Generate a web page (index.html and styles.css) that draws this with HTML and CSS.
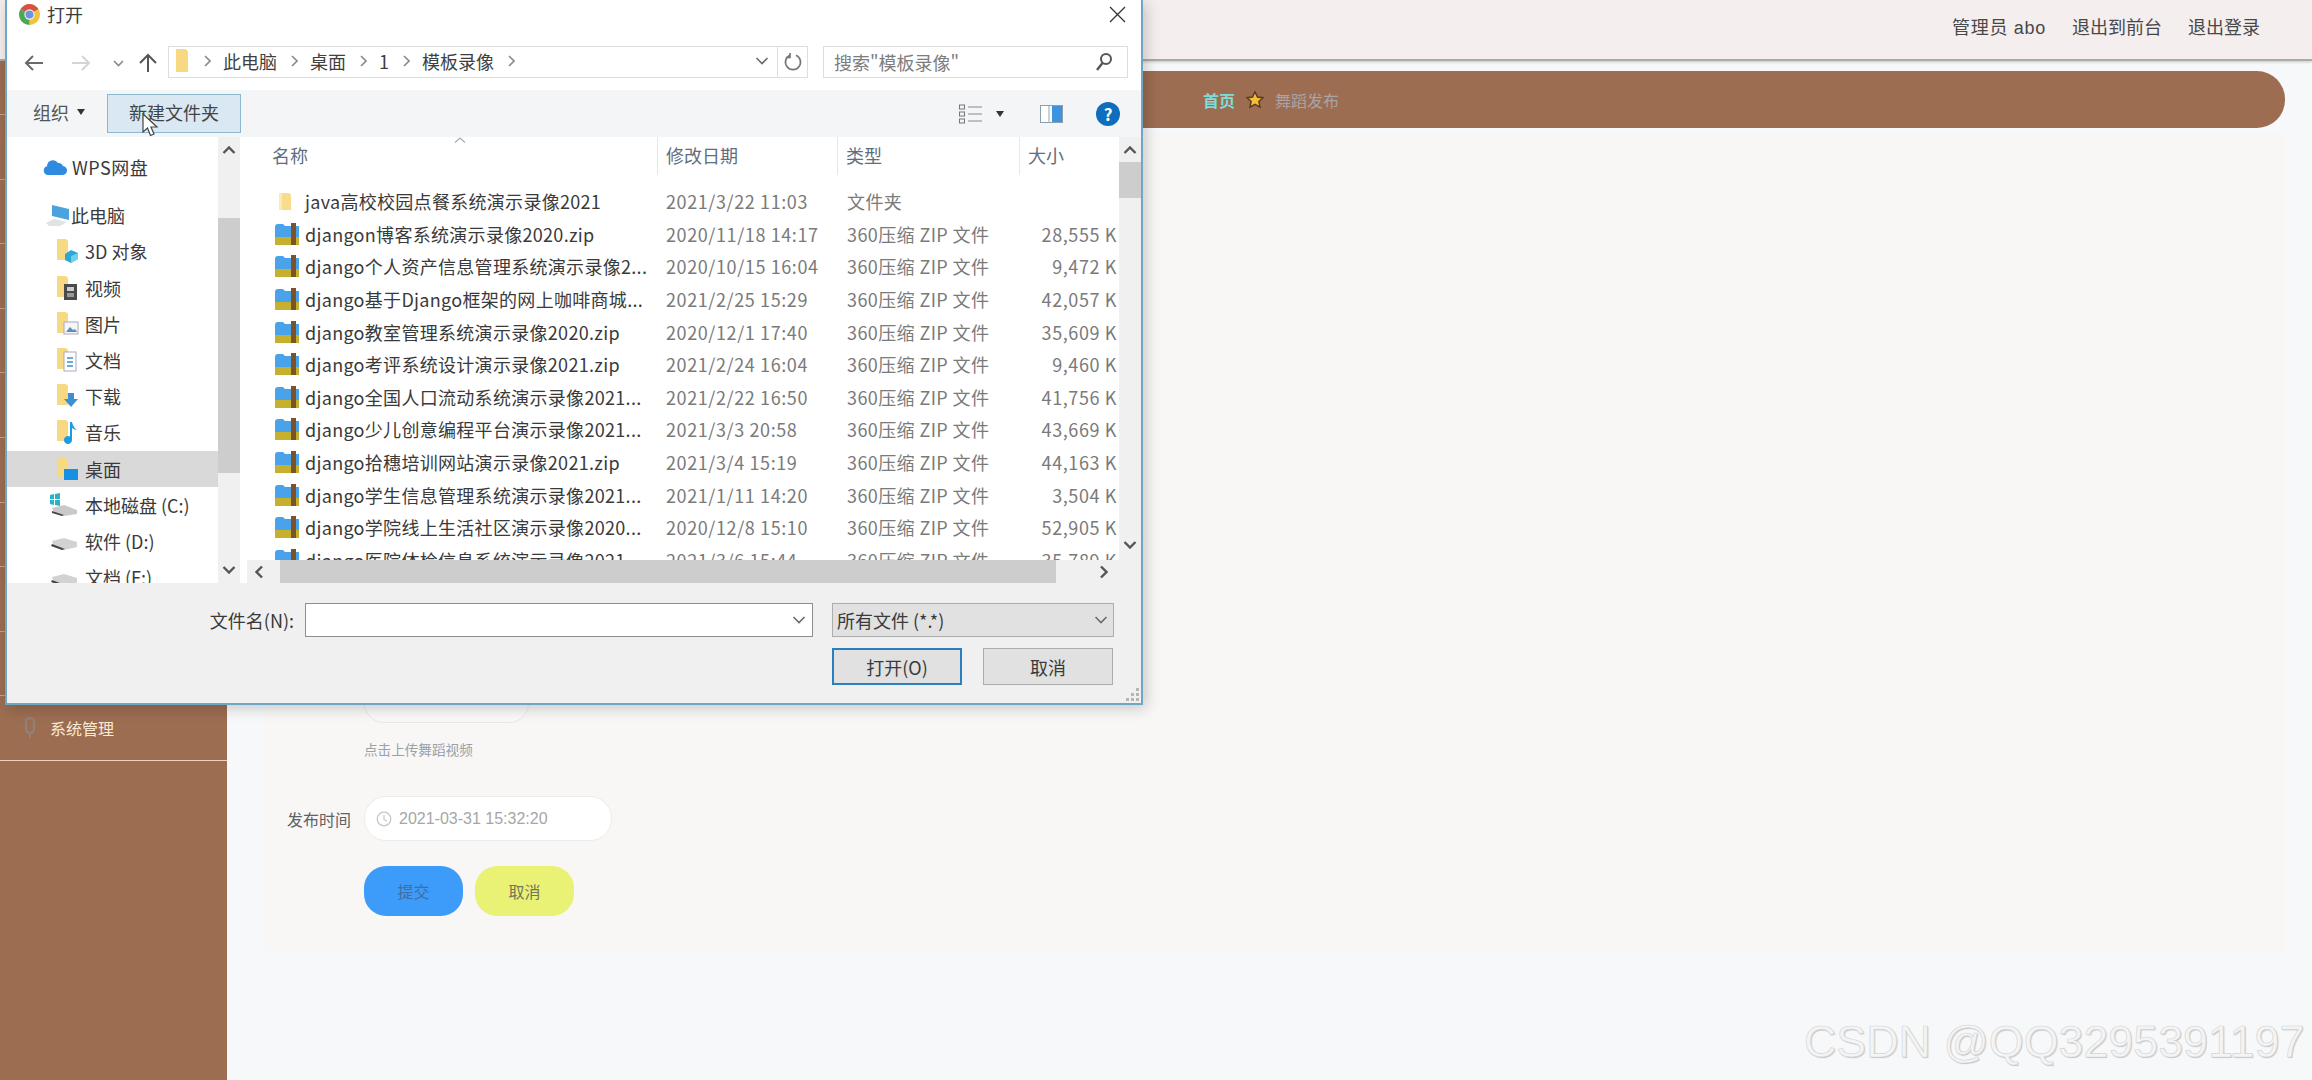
FILE: index.html
```html
<!DOCTYPE html>
<html lang="zh-CN">
<head>
<meta charset="utf-8">
<title>舞蹈发布</title>
<link rel="stylesheet" href="styles.css">
</head>
<body>
<svg class="defs" width="0" height="0" aria-hidden="true">
  <symbol id="i-chev-r" viewBox="0 0 8 14"><path d="M2 2l5 5-5 5" fill="none" stroke="#8a8a8a" stroke-width="1.6"/></symbol>
  <symbol id="i-chev-d" viewBox="0 0 14 8"><path d="M1.500 1l5.500 5.500L12.500 1" fill="none" stroke="#6a6a6a" stroke-width="1.600"/></symbol>
  <symbol id="i-up" viewBox="0 0 14 8"><path d="M1.500 7L7 1.500 12.500 7" fill="none" stroke="#555" stroke-width="2.400"/></symbol>
  <symbol id="i-down" viewBox="0 0 14 8"><path d="M1.500 1L7 6.500 12.500 1" fill="none" stroke="#555" stroke-width="2.400"/></symbol>
  <symbol id="i-left" viewBox="0 0 8 14"><path d="M7 1.500L1.500 7 7 12.500" fill="none" stroke="#555" stroke-width="2.400"/></symbol>
  <symbol id="i-right" viewBox="0 0 8 14"><path d="M1 1.500L6.500 7 1 12.500" fill="none" stroke="#555" stroke-width="2.400"/></symbol>
  <symbol id="i-zip" viewBox="0 0 24 22">
    <path d="M0 4q0-3 3-3h5l2 2h14v12H0z" fill="#4aa3ea"/>
    <rect x="0" y="14" width="24" height="8" fill="#c8b02f"/>
    <rect x="16" y="0" width="5" height="22" fill="#7a5426"/>
  </symbol>
  <symbol id="i-folder" viewBox="0 0 16 18"><path d="M2 0h10l2 2v15H2z" fill="#f7dc8c"/><rect x="2" y="0" width="3" height="17" fill="#fbeab8"/></symbol>
  <symbol id="i-tf" viewBox="0 0 12 22"><path d="M0 0h9l2 2v19H0z" fill="#f7d983"/></symbol>
  <symbol id="i-wps" viewBox="0 0 24 20"><path d="M5 18a4.500 4.500 0 0 1-1-8.800A6 6 0 0 1 15 6a5 5 0 0 1 5 3 4.500 4.500 0 0 1-1 9z" fill="#2f8be0"/></symbol>
  <symbol id="i-pc" viewBox="0 0 26 24">
    <path d="M7 2l17 4v11L7 13z" fill="#4ba3dd"/>
    <path d="M1 20l8-4 13 3-7 4H4z" fill="#dfe3e6"/>
  </symbol>
  <symbol id="i-3d" viewBox="0 0 24 24"><use href="#i-tf" width="12" height="22"/><path d="M8 15l6-4 7 3v6l-7 4-6-3z" fill="#2fa6d6"/><path d="M14 17l7-3v6l-7 4z" fill="#6fd0ea"/></symbol>
  <symbol id="i-video" viewBox="0 0 24 24"><use href="#i-tf" width="12" height="22"/><rect x="7" y="8" width="13" height="16" fill="#4a4a4a"/><rect x="10" y="11" width="7" height="4" fill="#ccc"/><rect x="10" y="17" width="7" height="4" fill="#999"/></symbol>
  <symbol id="i-pic" viewBox="0 0 24 24"><use href="#i-tf" width="12" height="22"/><rect x="7" y="10" width="14" height="12" fill="#f4f6f8" stroke="#aab" stroke-width="1"/><path d="M9 20l4-5 3 3 2-1 2 3z" fill="#5a8fb5"/></symbol>
  <symbol id="i-doc" viewBox="0 0 24 24"><use href="#i-tf" width="12" height="22"/><rect x="7" y="4" width="12" height="19" fill="#fff" stroke="#aab" stroke-width="1"/><path d="M10 10h6M10 14h6M10 18h6" stroke="#3d8fd1" stroke-width="1.500"/></symbol>
  <symbol id="i-dl" viewBox="0 0 24 24"><use href="#i-tf" width="12" height="22"/><path d="M11 9h6v6h4l-7 8-7-8h4z" fill="#3d8fd1"/></symbol>
  <symbol id="i-music" viewBox="0 0 24 24"><use href="#i-tf" width="12" height="22"/><path d="M13 2h2q1 5 5 8-2 0-5-2v12a4 4 0 1 1-2-3.500z" fill="#1e9be0"/></symbol>
  <symbol id="i-desk" viewBox="0 0 24 24"><use href="#i-tf" width="12" height="22"/><rect x="7" y="12" width="14" height="11" fill="#1590e2"/></symbol>
  <symbol id="i-drive-c" viewBox="0 0 30 24">
    <path d="M3 15l12-3 13 5v4l-13 2-10-3z" fill="#c9c9c9"/><path d="M3 20l10 3 2-1-12-4z" fill="#444"/>
    <path d="M1 2l4-1v5H1zM6 1l5-1v6H6zM1 7h4v5l-4-1zM6 7h5v6l-5-1z" fill="#29b3c9"/>
  </symbol>
  <symbol id="i-drive" viewBox="0 0 30 24">
    <path d="M3 12l12-3 13 4v5l-13 3-10-3z" fill="#d2d2d2"/><path d="M2 17l11 4 3-1-13-5z" fill="#444"/>
  </symbol>
</svg>

<div class="page">
  <header class="topbar">
    <span class="top-user">管理员 abo</span>
    <span>退出到前台</span>
    <span>退出登录</span>
  </header>
  <div class="shell">
    <aside class="sidebar">
      <ul class="menu">
        <li></li><li></li><li></li><li></li><li></li><li></li><li></li><li></li><li></li>
        <li class="menu-item">
          <svg class="menu-icon" width="12" height="22" viewBox="0 0 12 22"><rect x="2" y="1" width="8" height="15" rx="4" fill="none" stroke="#8f8176" stroke-width="2.500"/><path d="M6 16v5" stroke="#8f8176" stroke-width="2"/></svg>
          <span>系统管理</span>
        </li>
      </ul>
    </aside>
    <main class="content">
      <nav class="crumbs">
        <span class="crumb-home">首页</span>
        <svg class="star" width="18" height="17" viewBox="0 0 24 23"><path d="M12 1l3.300 7.200 7.700.8-5.800 5.200 1.700 7.800L12 18l-6.900 4 1.700-7.800L1 9l7.700-.8z" fill="#f4bd3c" stroke="#5a3d20" stroke-width="2"/></svg>
        <span class="crumb-now">舞蹈发布</span>
      </nav>
      <section class="card">
        <div class="field-row">
          <span class="label"></span>
          <div class="upload"></div>
        </div>
        <p class="hint">点击上传舞蹈视频</p>
        <div class="field-row date-row">
          <span class="label">发布时间</span>
          <div class="date-input">
            <svg width="16" height="16" viewBox="0 0 16 16"><circle cx="8" cy="8" r="6.800" fill="none" stroke="#c8c8c8" stroke-width="1.300"/><path d="M8 4v4.500l3 1.500" fill="none" stroke="#c8c8c8" stroke-width="1.300"/></svg>
            <span>2021-03-31 15:32:20</span>
          </div>
        </div>
        <div class="actions">
          <button class="btn btn-submit" type="button">提交</button>
          <button class="btn btn-cancel" type="button">取消</button>
        </div>
      </section>
    </main>
  </div>
</div>

<div class="watermark">CSDN @QQ3295391197</div>

<div class="dialog">
  <div class="titlebar">
    <svg class="chrome" width="23" height="23" viewBox="0 0 24 24">
      <path d="M12 12L2.500 6.500A11 11 0 0 1 21.500 6.500z" fill="#d9503f"/>
      <path d="M12 12L21.500 6.500A11 11 0 0 1 12 23z" fill="#f0c33c"/>
      <path d="M12 12L12 23A11 11 0 0 1 2.500 6.500z" fill="#4ca852"/>
      <circle cx="12" cy="12" r="5.400" fill="#f2f2f2"/>
      <circle cx="12" cy="12" r="4.200" fill="#6c94e0"/>
    </svg>
    <span class="title">打开</span>
    <svg class="close" width="17" height="17" viewBox="0 0 17 17"><path d="M1 1l15 15M16 1L1 16" stroke="#333" stroke-width="1.300"/></svg>
  </div>

  <div class="navrow">
    <svg class="navicons" width="161" height="32" viewBox="0 0 161 32">
      <path d="M36 17H19M26 10l-7 7 7 7" fill="none" stroke="#6b6b6b" stroke-width="2"/>
      <path d="M65 17h17M75 10l7 7-7 7" fill="none" stroke="#d4d4d4" stroke-width="2"/>
      <path d="M107 15l4.500 4.500L116 15" fill="none" stroke="#8a8a8a" stroke-width="1.600"/>
      <path d="M141 26V9M133 17l8-8 8 8" fill="none" stroke="#555" stroke-width="2"/>
    </svg>
    <div class="address">
      <svg class="addr-folder" width="15" height="24"><use href="#i-tf" width="15" height="24"/></svg>
      <svg width="8" height="14"><use href="#i-chev-r"/></svg>
      <span>此电脑</span>
      <svg width="8" height="14"><use href="#i-chev-r"/></svg>
      <span>桌面</span>
      <svg width="8" height="14"><use href="#i-chev-r"/></svg>
      <span>1</span>
      <svg width="8" height="14"><use href="#i-chev-r"/></svg>
      <span>模板录像</span>
      <svg width="8" height="14"><use href="#i-chev-r"/></svg>
      <span class="addr-drop"><svg width="14" height="8"><use href="#i-chev-d"/></svg></span>
      <span class="addr-refresh"><svg width="20" height="20" viewBox="0 0 20 20"><path d="M13 3.300a7.500 7.500 0 1 1-6 0M7 1v4.500H2.800" fill="none" stroke="#777" stroke-width="1.700"/></svg></span>
    </div>
    <div class="search">
      <span>搜索"模板录像"</span>
      <svg width="18" height="20" viewBox="0 0 18 20"><circle cx="11" cy="7" r="5" fill="none" stroke="#555" stroke-width="2"/><path d="M7.500 11L2 18" stroke="#555" stroke-width="2.400"/></svg>
    </div>
  </div>

  <div class="toolbar">
    <span class="tool-org">组织</span>
    <span class="caret"></span>
    <span class="tool-new">新建文件夹</span>
    <div class="tool-right">
      <svg width="23" height="20" viewBox="0 0 23 20"><path d="M9 3h14M9 10h14M9 17h14" stroke="#8a8a8a" stroke-width="1.200"/><rect x=".5" y="1" width="5" height="4" fill="none" stroke="#777"/><rect x=".5" y="8" width="5" height="4" fill="none" stroke="#777"/><rect x=".5" y="15" width="5" height="4" fill="none" stroke="#777"/></svg>
      <span class="caret caret-view"></span>
      <svg class="pane-icon" width="23" height="18" viewBox="0 0 23 18"><rect x=".5" y=".5" width="22" height="17" fill="#fff" stroke="#8aa0b0"/><rect x="12" y="1" width="10" height="16" fill="#3d94de"/><rect x="8" y="1" width="2" height="16" fill="#c5d2dc"/></svg>
      <span class="help">?</span>
    </div>
  </div>

  <div class="panes">
    <div class="tree">
      <div class="tree-item lvl1"><svg width="24" height="20"><use href="#i-wps"/></svg><span class="wps">WPS网盘</span></div>
      <div class="tree-item lvl1 tree-pc"><svg width="26" height="24"><use href="#i-pc"/></svg><span>此电脑</span></div>
      <div class="tree-item lvl2"><svg width="24" height="24"><use href="#i-3d"/></svg><span>3D 对象</span></div>
      <div class="tree-item lvl2"><svg width="24" height="24"><use href="#i-video"/></svg><span>视频</span></div>
      <div class="tree-item lvl2"><svg width="24" height="24"><use href="#i-pic"/></svg><span>图片</span></div>
      <div class="tree-item lvl2"><svg width="24" height="24"><use href="#i-doc"/></svg><span>文档</span></div>
      <div class="tree-item lvl2"><svg width="24" height="24"><use href="#i-dl"/></svg><span>下载</span></div>
      <div class="tree-item lvl2"><svg width="24" height="24"><use href="#i-music"/></svg><span>音乐</span></div>
      <div class="tree-item lvl2 selected"><svg width="24" height="24"><use href="#i-desk"/></svg><span>桌面</span></div>
      <div class="tree-item drive"><svg width="30" height="24"><use href="#i-drive-c"/></svg><span>本地磁盘 (C:)</span></div>
      <div class="tree-item drive"><svg width="30" height="24"><use href="#i-drive"/></svg><span>软件 (D:)</span></div>
      <div class="tree-item drive"><svg width="30" height="24"><use href="#i-drive"/></svg><span>文档 (F:)</span></div>
    </div>
    <div class="vscroll tree-scroll">
      <svg width="14" height="8"><use href="#i-up"/></svg>
      <div class="vthumb"></div>
      <svg class="vdown" width="14" height="8"><use href="#i-down"/></svg>
    </div>

    <div class="files">
      <div class="files-main">
        <div class="file-head">
          <span class="col-name">名称<svg class="sort" width="14" height="8" viewBox="0 0 14 8"><path d="M2 6.500L7 2l5 4.500" fill="none" stroke="#aab" stroke-width="1.300"/></svg></span>
          <span class="col">修改日期</span>
          <span class="col">类型</span>
          <span class="col">大小</span>
        </div>
        <div class="file-rows">
          <div class="file-row"><span class="name"><svg class="ficon-folder" width="16" height="18"><use href="#i-folder"/></svg>java高校校园点餐系统演示录像2021</span><span class="meta">2021/3/22 11:03</span><span class="meta">文件夹</span><span class="size"></span></div>
          <div class="file-row"><span class="name"><svg class="ficon" width="24" height="22"><use href="#i-zip"/></svg>djangon博客系统演示录像2020.zip</span><span class="meta">2020/11/18 14:17</span><span class="meta">360压缩 ZIP 文件</span><span class="size">28,555 K</span></div>
          <div class="file-row"><span class="name"><svg class="ficon" width="24" height="22"><use href="#i-zip"/></svg>django个人资产信息管理系统演示录像2...</span><span class="meta">2020/10/15 16:04</span><span class="meta">360压缩 ZIP 文件</span><span class="size">9,472 K</span></div>
          <div class="file-row"><span class="name"><svg class="ficon" width="24" height="22"><use href="#i-zip"/></svg>django基于Django框架的网上咖啡商城...</span><span class="meta">2021/2/25 15:29</span><span class="meta">360压缩 ZIP 文件</span><span class="size">42,057 K</span></div>
          <div class="file-row"><span class="name"><svg class="ficon" width="24" height="22"><use href="#i-zip"/></svg>django教室管理系统演示录像2020.zip</span><span class="meta">2020/12/1 17:40</span><span class="meta">360压缩 ZIP 文件</span><span class="size">35,609 K</span></div>
          <div class="file-row"><span class="name"><svg class="ficon" width="24" height="22"><use href="#i-zip"/></svg>django考评系统设计演示录像2021.zip</span><span class="meta">2021/2/24 16:04</span><span class="meta">360压缩 ZIP 文件</span><span class="size">9,460 K</span></div>
          <div class="file-row"><span class="name"><svg class="ficon" width="24" height="22"><use href="#i-zip"/></svg>django全国人口流动系统演示录像2021...</span><span class="meta">2021/2/22 16:50</span><span class="meta">360压缩 ZIP 文件</span><span class="size">41,756 K</span></div>
          <div class="file-row"><span class="name"><svg class="ficon" width="24" height="22"><use href="#i-zip"/></svg>django少儿创意编程平台演示录像2021...</span><span class="meta">2021/3/3 20:58</span><span class="meta">360压缩 ZIP 文件</span><span class="size">43,669 K</span></div>
          <div class="file-row"><span class="name"><svg class="ficon" width="24" height="22"><use href="#i-zip"/></svg>django拾穗培训网站演示录像2021.zip</span><span class="meta">2021/3/4 15:19</span><span class="meta">360压缩 ZIP 文件</span><span class="size">44,163 K</span></div>
          <div class="file-row"><span class="name"><svg class="ficon" width="24" height="22"><use href="#i-zip"/></svg>django学生信息管理系统演示录像2021...</span><span class="meta">2021/1/11 14:20</span><span class="meta">360压缩 ZIP 文件</span><span class="size">3,504 K</span></div>
          <div class="file-row"><span class="name"><svg class="ficon" width="24" height="22"><use href="#i-zip"/></svg>django学院线上生活社区演示录像2020...</span><span class="meta">2020/12/8 15:10</span><span class="meta">360压缩 ZIP 文件</span><span class="size">52,905 K</span></div>
          <div class="file-row"><span class="name"><svg class="ficon" width="24" height="22"><use href="#i-zip"/></svg>django医院体检信息系统演示录像2021...</span><span class="meta">2021/3/6 15:44</span><span class="meta">360压缩 ZIP 文件</span><span class="size">35,789 K</span></div>
        </div>
        <div class="hscroll">
          <svg width="8" height="14"><use href="#i-left"/></svg>
          <div class="hthumb"></div>
          <svg width="8" height="14"><use href="#i-right"/></svg>
        </div>
      </div>
      <div class="vscroll list-scroll">
        <svg width="14" height="8"><use href="#i-up"/></svg>
        <div class="vthumb"></div>
        <svg class="vdown" width="14" height="8"><use href="#i-down"/></svg>
      </div>
    </div>
  </div>

  <div class="footer">
    <div class="foot-row">
      <span class="foot-label">文件名(N):</span>
      <div class="foot-input"><svg width="14" height="8"><use href="#i-chev-d"/></svg></div>
      <div class="foot-select"><span>所有文件 (*.*)</span><svg width="14" height="8"><use href="#i-chev-d"/></svg></div>
    </div>
    <div class="foot-buttons">
      <span class="dlg-btn dlg-primary">打开(O)</span>
      <span class="dlg-btn">取消</span>
    </div>
    <svg class="grip" width="16" height="16" viewBox="0 0 16 16"><g fill="#b5b5b5"><rect x="12" y="2" width="3" height="3"/><rect x="7" y="7" width="3" height="3"/><rect x="12" y="7" width="3" height="3"/><rect x="2" y="12" width="3" height="3"/><rect x="7" y="12" width="3" height="3"/><rect x="12" y="12" width="3" height="3"/></g></svg>
  </div>

  <svg class="cursor" width="16" height="25" viewBox="0 0 16 25"><path d="M1 1v18l4.500-4 3 7.500 3.500-1.500-3-7h6z" fill="#fff" stroke="#444" stroke-width="1.200"/></svg>
</div>
</body>
</html>
```

FILE: styles.css
```css
* { box-sizing: border-box; }
html, body { margin: 0; height: 100%; }
body {
  position: relative;
  width: 2312px;
  height: 1080px;
  overflow: hidden;
  background: #f7f8fa;
  font-family: "Liberation Sans", "Noto Sans CJK SC", sans-serif;
  font-size: 16px;
  color: #606266;
}
.defs { position: absolute; }

/* ---------- page behind the dialog ---------- */
.page { display: flex; flex-direction: column; height: 1080px; }
.topbar {
  flex: none;
  height: 61px;
  display: flex;
  justify-content: flex-end;
  align-items: center;
  gap: 26px;
  padding: 0 52px 8px 0;
  background: #f5eeee;
  border-bottom: 2px solid #a9a9a9;
  box-shadow: 0 1px 3px rgba(0,0,0,.2);
  font-size: 18px;
  color: #484848;
}
.top-user { letter-spacing: .7px; }
.shell { flex: 1; display: flex; min-height: 0; }
.sidebar { flex: none; width: 227px; background: #9c6d51; padding-top: 53px; }
.menu { list-style: none; margin: 0; padding: 0; border-top: 1px solid #c4a18a; }
.menu li { height: 64.6px; border-bottom: 1px solid #c4a18a; }
.menu .menu-item {
  display: flex;
  align-items: center;
  gap: 14px;
  padding: 0 0 0 24px;
  color: #fbe9d3;
  border-bottom-color: #ecd3c0;
}
.content { flex: 1; min-width: 0; padding: 10px 27px 0 20px; }
.crumbs {
  height: 57px;
  display: flex;
  align-items: center;
  gap: 11px;
  padding-left: 956px;
  background: #9c6d51;
  border-radius: 0 28px 28px 0;
}
.crumb-home { color: #7fdcd8; font-weight: bold; }
.crumb-now { color: #aaa3a6; }
.star { flex: none; }
.card {
  margin: 5px 0 0 18px;
  height: 819px;
  padding: 540px 0 0 22px;
  background: #f8f7f6;
  box-shadow: 0 0 3px #f8f7f6;
}
.field-row { display: flex; align-items: center; gap: 13px; }
.label { width: 64px; flex: none; }
.upload {
  width: 165px;
  height: 50px;
  border: 1px solid #e9e9e9;
  border-radius: 20px;
  background: #f9f9f9;
}
.hint { margin: 19px 0 0 77px; font-size: 13.6px; line-height: 18px; color: #9aa1a8; }
.date-row { margin-top: 36px; }
.date-input {
  width: 248px;
  height: 45px;
  display: flex;
  align-items: center;
  gap: 7px;
  padding-left: 11px;
  background: #fff;
  border: 1px solid #ececec;
  border-radius: 22px;
  color: #a6a6a6;
}
.actions { display: flex; gap: 12px; margin: 25px 0 0 77px; }
.btn {
  width: 99px;
  height: 50px;
  border: 0;
  border-radius: 22px;
  font: inherit;
  padding: 0;
}
.btn-submit { background: #3d9bfa; color: #3f6ea6; }
.btn-cancel { background: #e9f274; color: #72755a; }

.watermark {
  position: absolute;
  left: 1804px;
  top: 1016px;
  font-size: 44.8px;
  line-height: 50px;
  white-space: nowrap;
  color: #f3f4f6;
  -webkit-text-stroke: .6px #d4d4d4;
  text-shadow: 1px 1px 1px #c4c4c4;
}

/* ---------- file dialog ---------- */
.dialog {
  position: absolute;
  left: 5px;
  top: 0;
  width: 1138px;
  height: 705px;
  display: flex;
  flex-direction: column;
  background: #fff;
  border: 2px solid #6ea6c4;
  border-top: 0;
  box-shadow: 3px 3px 14px rgba(0,0,0,.2);
  font-family: "Noto Sans CJK SC", "Noto Sans", sans-serif;
  font-size: 18px;
  line-height: 24px;
  color: #3a3a3a;
}
.titlebar { flex: none; height: 28px; display: flex; align-items: center; padding: 0 15px 0 11px; }
.chrome { flex: none; }
.title { margin-left: 6px; }
.close { margin-left: auto; }

.navrow { flex: none; height: 32px; margin: 18px 0 12px; display: flex; }
.navicons { flex: none; }
.address {
  width: 640px;
  display: flex;
  align-items: center;
  gap: 12.5px;
  padding: 0 0 2px 6px;
  border: 1px solid #dedede;
  color: #3f3f3f;
}
.addr-drop { margin-left: auto; width: 30px; display: flex; justify-content: center; margin-right: -12.5px; }
.addr-refresh { width: 30px; height: calc(100% + 2px); margin-bottom: -2px; display: flex; align-items: center; justify-content: center; border-left: 1px solid #dedede; }
.search {
  width: 305px;
  margin-left: 15px;
  display: flex;
  align-items: center;
  justify-content: space-between;
  padding: 0 14px 0 10px;
  border: 1px solid #dedede;
  color: #7d7d7d;
}

.toolbar {
  flex: none;
  height: 47px;
  display: flex;
  align-items: center;
  background: #f4f5f6;
  padding: 0 21px 3px 26px;
  color: #555;
}
.caret { width: 0; height: 0; border: 4.500px solid transparent; border-top: 6px solid #333; border-bottom: 0; margin-left: 8px; }
.tool-new {
  height: 39px;
  width: 134px;
  margin: 3px 0 0 22px;
  padding-bottom: 3px;
  display: flex;
  align-items: center;
  justify-content: center;
  background: #d9e8f3;
  border: 1px solid #8db8d2;
  color: #444;
}
.tool-right { margin-left: auto; margin-top: 3px; display: flex; align-items: center; }
.caret-view { margin-left: 14px; }
.pane-icon { margin-left: 36px; }
.help {
  width: 24px;
  height: 24px;
  margin-left: 33px;
  border-radius: 50%;
  background: #0e6ebd;
  color: #fff;
  font-weight: bold;
  font-size: 17px;
  line-height: 24px;
  text-align: center;
}

.panes { flex: none; height: 446px; display: flex; }
.tree { flex: none; width: 211px; padding-top: 12px; overflow: hidden; }
.tree-item { height: 36.2px; display: flex; align-items: center; white-space: nowrap; }
.tree-item span { color: #3a3a3a; }
.wps { letter-spacing: .5px; }
.lvl1 { padding-left: 36px; gap: 5px; }
.tree-pc { margin-top: 12px; padding-left: 38px; gap: 0; }
.lvl2 { padding-left: 50px; gap: 4px; }
.drive { padding-left: 42px; gap: 6px; }
.selected { background: #d9d9d9; }
.vscroll { flex: none; width: 22px; display: flex; flex-direction: column; align-items: center; background: #f0f0f0; padding-top: 9px; }
.vscroll svg { flex: none; }
.tree-scroll .vthumb { margin-top: 64px; width: 22px; height: 255px; background: #cdcdcd; }
.list-scroll .vthumb { margin-top: 8px; width: 22px; height: 36px; background: #cdcdcd; }
.tree-scroll .vdown { margin-top: auto; margin-bottom: 9px; }
.list-scroll .vdown { margin-top: 343px; }

.files { flex: 1; min-width: 0; display: flex; margin-left: 7px; }
.files-main { flex: 1; min-width: 0; display: flex; flex-direction: column; }
.file-head, .file-row { display: grid; grid-template-columns: 410px 180px 182px 100px; }
.file-head { flex: none; height: 38px; align-items: center; color: #5f6e7c; }
.col-name { position: relative; height: 100%; display: flex; align-items: center; padding: 0 0 2px 25px; }
.col { height: 100%; display: flex; align-items: center; padding: 0 0 2px 8px; border-left: 1px solid #e8e8e8; }
.sort { position: absolute; left: 206px; top: -1px; }
.file-rows { flex: none; height: 385px; padding-top: 10px; overflow: hidden; }
.file-row { height: 32.6px; align-items: center; white-space: nowrap; }
.name { position: relative; display: flex; align-items: center; padding-left: 58px; color: #3a3a3a; letter-spacing: .3px; }
.ficon { position: absolute; left: 28px; top: 1px; }
.ficon-folder { position: absolute; left: 30px; top: 4px; }
.meta { padding-left: 9px; color: #7a7a7a; letter-spacing: .6px; }
.meta + .meta { padding-left: 10px; letter-spacing: .4px; }
.size { padding-right: 2px; text-align: right; color: #7a7a7a; letter-spacing: .6px; }
.hscroll {
  flex: none;
  height: 23px;
  display: flex;
  align-items: center;
  padding: 0 11px 0 8px;
  background: #f0f0f0;
}
.hscroll svg { flex: none; }
.hthumb { margin: 0 44px 0 17px; flex: 1; height: 100%; background: #cdcdcd; }

.footer { position: relative; flex: 1; min-height: 0; background: #f0f0f0; padding-top: 20px; }
.foot-row { display: flex; align-items: stretch; height: 34px; }
.foot-label { width: 287px; text-align: right; align-self: center; white-space: nowrap; }
.foot-input {
  width: 508px;
  margin-left: 11px;
  display: flex;
  align-items: center;
  justify-content: flex-end;
  padding-right: 6px;
  background: #fff;
  border: 1px solid #8e8e8e;
}
.foot-select {
  width: 282px;
  margin-left: 19px;
  display: flex;
  align-items: center;
  justify-content: space-between;
  padding: 0 5px 0 4px;
  background: #e1e1e1;
  border: 1px solid #adadad;
}
.foot-buttons { display: flex; gap: 21px; margin: 11px 0 0 825px; }
.dlg-btn {
  width: 130px;
  height: 37px;
  display: flex;
  align-items: center;
  justify-content: center;
  background: #e1e1e1;
  border: 1px solid #adadad;
}
.dlg-primary { border: 2px solid #2a7fc1; }
.grip { position: absolute; right: 1px; bottom: 1px; }
.cursor { position: absolute; left: 135px; top: 113px; }
```
